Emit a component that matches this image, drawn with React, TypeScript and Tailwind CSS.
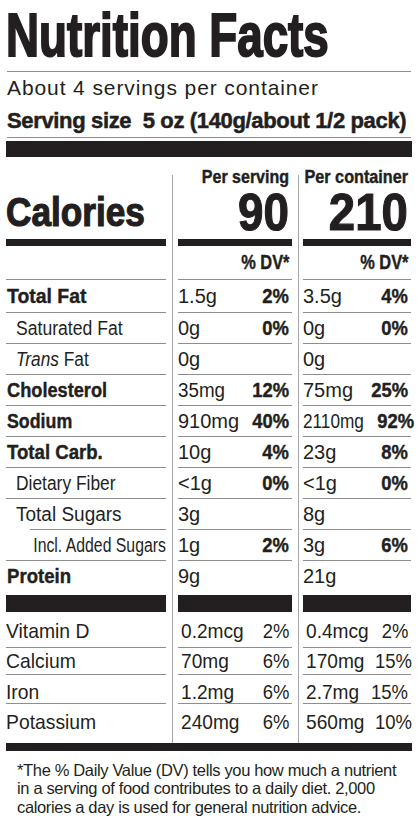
import React from "react";

const LINE = "bg-[#8e8e8e]";

type Row = {
  label: React.ReactNode;
  wrap: string;
  h: string;
  v1: React.ReactNode;
  p1?: string;
  v2: React.ReactNode;
  p2?: string;
  lineCls?: string;
};

function Gap1({ cls = "" }: { cls?: string }) {
  return (
    <div className={`w-[12px] shrink-0 flex pl-[6px] ${cls}`}>
      <div className="w-px bg-[#a6a6a6]" />
    </div>
  );
}

function Gap2({ cls = "" }: { cls?: string }) {
  return (
    <div className={`w-[11px] shrink-0 flex pl-[6px] ${cls}`}>
      <div className="w-px bg-[#a6a6a6]" />
    </div>
  );
}

const B = (t: string, s: string) => (
  <span className={`inline-block origin-left font-bold [-webkit-text-stroke:0.4px_#231f20] ${s}`}>{t}</span>
);
const R = (t: React.ReactNode, s: string) => (
  <span className={`inline-block origin-left ${s}`}>{t}</span>
);

const rows: Row[] = [
  { label: B("Total Fat", "scale-x-[0.97]"), wrap: "pl-[1px]", h: "h-[32.5px]", v1: "1.5g", p1: "2%", v2: "3.5g", p2: "4%" },
  { label: R("Saturated Fat", "scale-x-[0.88]"), wrap: "pl-[10px]", h: "h-[31.1px]", v1: "0g", p1: "0%", v2: "0g", p2: "0%" },
  {
    label: R(
      <>
        <i>Trans</i> Fat
      </>,
      "scale-x-[0.865]"
    ),
    wrap: "pl-[10px]",
    h: "h-[31.1px]",
    v1: "0g",
    v2: "0g",
  },
  { label: B("Cholesterol", "scale-x-[0.91]"), wrap: "pl-[1px]", h: "h-[31.1px]", v1: R("35mg", "scale-x-[0.94]"), p1: "12%", v2: "75mg", p2: "25%" },
  { label: B("Sodium", "scale-x-[0.89]"), wrap: "pl-[1px]", h: "h-[31.1px]", v1: "910mg", p1: "40%", v2: R("2110mg", "scale-x-[0.86]"), p2: "92%" },
  { label: B("Total Carb.", "scale-x-[0.93]"), wrap: "pl-[1px]", h: "h-[31.1px]", v1: "10g", p1: "4%", v2: "23g", p2: "8%" },
  { label: R("Dietary Fiber", "scale-x-[0.87]"), wrap: "pl-[10px]", h: "h-[31.1px]", v1: "<1g", p1: "0%", v2: "<1g", p2: "0%" },
  { label: R("Total Sugars", "scale-x-[0.95]"), wrap: "pl-[10px]", h: "h-[31.1px]", v1: "3g", v2: "8g", lineCls: "ml-[24px]" },
  {
    label: <span className="inline-block origin-right scale-x-[0.79]">Incl. Added Sugars</span>,
    wrap: "justify-end",
    h: "h-[31.1px]",
    v1: "1g",
    p1: "2%",
    v2: "3g",
    p2: "6%",
  },
];

function NRow({ r }: { r: Row }) {
  return (
    <div className={`flex ${r.h}`}>
      <div className="w-[160px] shrink-0 flex flex-col">
        <div className={`flex-1 flex items-center ${r.wrap}`}>{r.label}</div>
        <div className={`h-px ${LINE} ${r.lineCls ?? ""}`} />
      </div>
      <Gap1 />
      <div className="w-[114px] shrink-0 flex flex-col">
        <div className="flex-1 flex items-center justify-between pr-[3px]">
          <span>{r.v1}</span>
          {r.p1 && (
            <span className="inline-block origin-right scale-x-[0.92] font-bold [-webkit-text-stroke:0.4px_#231f20]">{r.p1}</span>
          )}
        </div>
        <div className={`h-px ${LINE}`} />
      </div>
      <Gap2 />
      <div className="w-[108px] shrink-0 flex flex-col">
        <div className="flex-1 flex items-center justify-between pr-[3px]">
          <span>{r.v2}</span>
          {r.p2 && (
            <span className="inline-block origin-right scale-x-[0.92] font-bold [-webkit-text-stroke:0.4px_#231f20]">{r.p2}</span>
          )}
        </div>
        <div className={`h-px ${LINE}`} />
      </div>
    </div>
  );
}

type VRow = { label: string; h: string; pad: string; v1: string; p1: string; v2: string; p2: string; line: boolean };

const vrows: VRow[] = [
  { label: "Vitamin D", h: "h-[35.5px]", pad: "pt-[1px]", v1: "0.2mcg", p1: "2%", v2: "0.4mcg", p2: "2%", line: true },
  { label: "Calcium", h: "h-[27px]", pad: "", v1: "70mg", p1: "6%", v2: "170mg", p2: "15%", line: true },
  { label: "Iron", h: "h-[29.5px]", pad: "pt-[5px]", v1: "1.2mg", p1: "6%", v2: "2.7mg", p2: "15%", line: true },
  { label: "Potassium", h: "h-[38.7px]", pad: "pb-[4px]", v1: "240mg", p1: "6%", v2: "560mg", p2: "10%", line: false },
];

function VitRow({ r }: { r: VRow }) {
  return (
    <div className={`flex ${r.h} text-[21px]`}>
      <div className="w-[160px] shrink-0 flex flex-col">
        <div className={`flex-1 flex items-center ${r.pad}`}>
          <span className="inline-block origin-left scale-x-[0.92]">{r.label}</span>
        </div>
        {r.line && <div className={`h-px ${LINE}`} />}
      </div>
      <Gap1 />
      <div className="w-[114px] shrink-0 flex flex-col">
        <div className={`flex-1 flex items-center justify-between pl-[3px] pr-[3px] ${r.pad}`}>
          <span className="inline-block origin-left scale-x-[0.91]">{r.v1}</span>
          <span className="inline-block origin-right scale-x-[0.88]">{r.p1}</span>
        </div>
        {r.line && <div className={`h-px ${LINE}`} />}
      </div>
      <Gap2 />
      <div className="w-[108px] shrink-0 flex flex-col">
        <div className={`flex-1 flex items-center justify-between pl-[3px] pr-[3px] ${r.pad}`}>
          <span className="inline-block origin-left scale-x-[0.91]">{r.v2}</span>
          <span className="inline-block origin-right scale-x-[0.88]">{r.p2}</span>
        </div>
        {r.line && <div className={`h-px ${LINE}`} />}
      </div>
    </div>
  );
}

function BarRow({ h }: { h: string }) {
  return (
    <div className={`flex ${h}`}>
      <div className="w-[160px] shrink-0 bg-[#231f20]" />
      <Gap1 />
      <div className="w-[114px] shrink-0 bg-[#231f20]" />
      <Gap2 />
      <div className="w-[108px] shrink-0 bg-[#231f20]" />
    </div>
  );
}

export default function App() {
  return (
    <div className="w-[418px] h-[827px] bg-white px-[6px] text-[#231f20] font-['Liberation_Sans',Arial,sans-serif] leading-none overflow-hidden">
      {/* Title */}
      <div className="pt-[5px] h-[66px]">
        <span className="inline-block origin-left scale-x-[0.75] text-[61px] font-bold leading-none whitespace-nowrap [-webkit-text-stroke:2px_#231f20]">
          Nutrition Facts
        </span>
      </div>
      <div className={`mt-[5px] h-px ${LINE} mx-[1px]`} />
      <div className="mt-[5px] text-[21px] leading-none tracking-[0.9px] pl-[1px] whitespace-nowrap">
        About 4 servings per container
      </div>
      <div className="mt-[12px] text-[22px] font-bold leading-none tracking-[-0.35px] pl-[1px] whitespace-nowrap [-webkit-text-stroke:0.5px_#231f20]">
        Serving size&nbsp; 5 oz (140g/about 1/2 pack)
      </div>
      <div className={`mt-[5px] h-px ${LINE} mx-[1px]`} />
      <div className="mt-[3px] h-[16px] bg-[#231f20]" />

      {/* Calories header */}
      <div className="flex h-[82px]">
        <div className="w-[160px] shrink-0 flex flex-col justify-end pb-[7px]">
          <span className="inline-block origin-left scale-x-[0.88] text-[40px] font-bold leading-none [-webkit-text-stroke:1.2px_#231f20]">
            Calories
          </span>
        </div>
        <Gap1 cls="pt-[18px]" />
        <div className="w-[114px] shrink-0 flex flex-col items-end pt-[11px] pr-[3px]">
          <span className="inline-block origin-right scale-x-[0.89] text-[18px] font-bold leading-none whitespace-nowrap [-webkit-text-stroke:0.4px_#231f20]">
            Per serving
          </span>
          <span className="inline-block origin-right scale-x-[0.88] text-[52px] font-bold leading-none [-webkit-text-stroke:1.2px_#231f20]">
            90
          </span>
        </div>
        <Gap2 cls="pt-[18px]" />
        <div className="w-[108px] shrink-0 flex flex-col items-end pt-[11px] pr-[3px]">
          <span className="inline-block origin-right scale-x-[0.9] text-[18px] font-bold leading-none whitespace-nowrap [-webkit-text-stroke:0.4px_#231f20]">
            Per container
          </span>
          <span className="inline-block origin-right scale-x-[0.91] text-[52px] font-bold leading-none [-webkit-text-stroke:1.2px_#231f20]">
            210
          </span>
        </div>
      </div>
      <BarRow h="h-[7px]" />

      {/* % DV row */}
      <div className="flex h-[34px] text-[19.5px] font-bold">
        <div className="w-[160px] shrink-0 flex flex-col">
          <div className="flex-1" />
          <div className={`h-px ${LINE}`} />
        </div>
        <Gap1 />
        <div className="w-[114px] shrink-0 flex flex-col">
          <div className="flex-1 flex items-center justify-end pr-[3px]">
            <span className="inline-block origin-right scale-x-[0.84] whitespace-nowrap [-webkit-text-stroke:0.4px_#231f20]">% DV*</span>
          </div>
          <div className={`h-px ${LINE}`} />
        </div>
        <Gap2 />
        <div className="w-[108px] shrink-0 flex flex-col">
          <div className="flex-1 flex items-center justify-end pr-[3px]">
            <span className="inline-block origin-right scale-x-[0.84] whitespace-nowrap [-webkit-text-stroke:0.4px_#231f20]">% DV*</span>
          </div>
          <div className={`h-px ${LINE}`} />
        </div>
      </div>

      {/* Nutrient rows */}
      <div className="text-[20px] whitespace-nowrap">
        {rows.map((r, i) => (
          <NRow key={i} r={r} />
        ))}
        {/* Protein */}
        <div className="flex h-[34px]">
          <div className="w-[160px] shrink-0 flex items-center pb-[4px] pl-[1px]">
            <span className="inline-block origin-left scale-x-[0.93] font-bold [-webkit-text-stroke:0.4px_#231f20]">Protein</span>
          </div>
          <Gap1 />
          <div className="w-[114px] shrink-0 flex items-center pb-[4px]">9g</div>
          <Gap2 />
          <div className="w-[108px] shrink-0 flex items-center pb-[4px]">21g</div>
        </div>
      </div>
      <BarRow h="h-[17px]" />

      {/* Vitamins */}
      <div className="whitespace-nowrap">
        {vrows.map((r, i) => (
          <VitRow key={i} r={r} />
        ))}
      </div>
      <div className="h-[8px] bg-[#231f20]" />

      {/* Footnote */}
      <div className="mt-[10px] pl-[11px] text-[16.5px] leading-[18.5px] tracking-[-0.35px] whitespace-nowrap">
        <div>*The % Daily Value (DV) tells you how much a nutrient</div>
        <div>in a serving of food contributes to a daily diet. 2,000</div>
        <div>calories a day is used for general nutrition advice.</div>
      </div>
    </div>
  );
}
